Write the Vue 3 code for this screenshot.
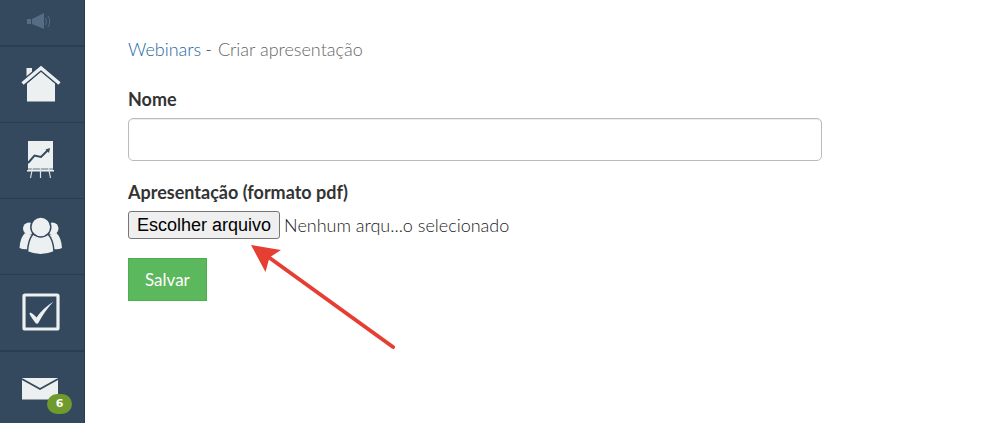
<script setup>
import { ref } from 'vue'

const name = ref('')
const fileLabel = ref('Nenhum arqu...o selecionado')
const picker = ref(null)

function onPick(event) {
  const file = event.target.files[0]
  if (file) fileLabel.value = file.name
}
</script>

<template>
  <div class="layout">
    <nav class="sidebar" aria-label="Menu">
      <a class="item first" href="#" aria-label="Campanhas">
        <svg width="26" height="18" viewBox="0 0 26 18" fill="#566b84">
          <rect x="1" y="7" width="4" height="5" />
          <path d="M6 7 18 1v16L6 12z" />
          <path d="M19.500 6q2 3.500 0 7M22 4q3.500 5.500 0 11" fill="none" stroke="#566b84" stroke-width="1" />
        </svg>
      </a>
      <a class="item" href="#" aria-label="Início">
        <svg width="40" height="37" viewBox="0 0 40 37" fill="#ecf0f1">
          <path d="M5.500 3h5.500v5l-5.500 4z" />
          <path d="M20 6.500 34 18.500V36.500H6V18.500z" />
          <path d="M1.500 18.500 20 3 38.500 18.500" fill="none" stroke="#34495e" stroke-width="6" />
          <path d="M1.500 18.500 20 3 38.500 18.500" fill="none" stroke="#ecf0f1" stroke-width="3.400" />
        </svg>
      </a>
      <a class="item" href="#" aria-label="Webinars">
        <svg width="28" height="38" viewBox="0 0 28 38">
          <path d="M1 0h25v27H1z" fill="#ecf0f1" />
          <path d="M1 22 7.500 14.500 14 16 21 9" fill="none" stroke="#34495e" stroke-width="2" />
          <path d="M18.500 8.500 23 7l-1 5z" fill="#34495e" />
          <path d="M1 27h25v2H1z" fill="#a5b0ba" />
          <path d="M0 29h27v1.500H0z" fill="#ecf0f1" />
          <path d="M5.500 27 3.500 37M13.500 27v10M21.500 27l2 10" stroke="#dce1e5" stroke-width="1.200" />
        </svg>
      </a>
      <a class="item" href="#" aria-label="Contatos">
        <svg width="44" height="38" viewBox="0 0 44 38" fill="#ecf0f1">
          <circle cx="10" cy="11.500" r="6" />
          <circle cx="33.500" cy="11.500" r="6" />
          <path d="M6 16Q1 21 .500 31q4 2 9 1L14 18zM37.500 16q5 5 5.500 15-4 2-9 1L29 18z" />
          <g stroke="#34495e" stroke-width="1.500">
            <path d="M14 17Q9 23 8.500 35q13 5.500 26.500 0-.500-12-6-18-7 4-15 0z" />
            <circle cx="21.800" cy="10" r="10" />
          </g>
        </svg>
      </a>
      <a class="item thick" href="#" aria-label="Tarefas">
        <svg width="38" height="38" viewBox="0 0 38 38">
          <rect x="2" y="2" width="34" height="34" rx="1" fill="none" stroke="#ecf0f1" stroke-width="3.200" />
          <path d="M8 19.500q2.500.500 6.500 5Q20 16 31.500 8.500 23 17.500 16 30.500q-1.500.500-2.500-.500Q9.500 25 7.500 21z" fill="#ecf0f1" />
        </svg>
      </a>
      <a class="item mail" href="#" aria-label="Mensagens">
        <svg width="36" height="22" viewBox="0 0 36 22">
          <path d="M0 0h36v21.500H0z" fill="#ecf0f1" />
          <path d="M0 1 18 11 36 1" fill="none" stroke="#34495e" stroke-width="1.700" />
        </svg>
        <span class="badge">6</span>
      </a>
    </nav>

    <main class="content">
      <div class="crumbs">
        <a href="#">Webinars</a>
        <span class="dash">-</span>
        <span class="current">Criar apresentação</span>
      </div>
      <form class="form" @submit.prevent>
        <label class="label" for="name">Nome</label>
        <input id="name" v-model="name" class="text" type="text" />

        <label class="label" for="file">Apresentação (formato pdf)</label>
        <div class="file-row">
          <input id="file" ref="picker" class="native" type="file" accept="application/pdf" tabindex="-1" @change="onPick" />
          <button class="choose" type="button" @click="picker.click()">Escolher arquivo</button>
          <span class="file-name">{{ fileLabel }}</span>
          <svg class="arrow" width="146" height="106" viewBox="0 0 146 106" fill="#e53e33">
            <path d="M16 11 142 102" stroke="#e53e33" stroke-width="4" stroke-linecap="round" />
            <path d="M0 0 30 5 18.500 12.500 14.500 27z" />
          </svg>
        </div>

        <button class="save" type="submit">Salvar</button>
      </form>
    </main>
  </div>
</template>

<style>
body {
  margin: 0;
  background: #fff;
}
</style>

<style scoped>
.layout {
  display: flex;
  height: 100vh;
  overflow: hidden;
  font-family: Lato, "Liberation Sans", sans-serif;
  font-size: 18px;
  line-height: 24px;
  color: #333;
}

.sidebar {
  flex: 0 0 85px;
  box-sizing: border-box;
  background: #34495e;
  border-right: 1px solid #243c56;
}

.item {
  display: flex;
  align-items: center;
  justify-content: center;
  box-sizing: border-box;
  height: 76px;
  padding: 0 3px 2px 0;
  border-bottom: 1px solid #2a3e52;
}

.item svg {
  display: block;
}

.first {
  height: 47px;
  padding: 0 6px 4px 0;
  border-bottom-width: 2px;
}

.thick {
  height: 77px;
  border-bottom-width: 2px;
}

.mail {
  position: relative;
  padding-right: 4px;
}

.badge {
  position: absolute;
  left: 47px;
  top: 42px;
  width: 25px;
  height: 20px;
  border-radius: 10px;
  background: #6f9a2c;
  color: #fff;
  font: bold 11px/20px "DejaVu Sans", sans-serif;
  text-align: center;
}

.content {
  flex: 1;
  min-width: 0;
  padding: 37px 43px 0;
}

.crumbs {
  display: flex;
  gap: 4px;
  color: #666;
  font-weight: 300;
}

.crumbs a {
  color: #23689f;
  text-decoration: none;
}

.dash {
  color: #333;
}

.current {
  margin-left: 2px;
}

.form {
  max-width: 694px;
  margin-top: 26px;
}

.label {
  display: block;
  margin-bottom: 7px;
  font-weight: 700;
}

.text {
  display: block;
  box-sizing: border-box;
  width: 100%;
  height: 43px;
  margin-bottom: 19px;
  padding: 6px 12px;
  border: 1px solid #bbb;
  border-radius: 5px;
  box-shadow: inset 0 1px 1px rgba(0, 0, 0, 0.075);
  font: inherit;
}

.file-row {
  position: relative;
  display: flex;
  align-items: center;
  gap: 4px;
  margin-bottom: 19px;
  color: #222;
  font-weight: 300;
}

.native {
  position: absolute;
  width: 1px;
  height: 1px;
  opacity: 0;
  pointer-events: none;
}

.choose {
  box-sizing: border-box;
  height: 28px;
  padding: 0 8px;
  border: 1px solid #767676;
  border-radius: 3px;
  background: #efefef;
  color: #000;
  font: 18px/24px "Liberation Sans", Arial, sans-serif;
}

.arrow {
  position: absolute;
  left: 123px;
  top: 34px;
  pointer-events: none;
}

.save {
  height: 43px;
  padding: 0 16px;
  border: 1px solid #4cae4c;
  border-radius: 0;
  background: #5cb85c;
  color: #fff;
  font: inherit;
  font-size: 17px;
}
</style>
